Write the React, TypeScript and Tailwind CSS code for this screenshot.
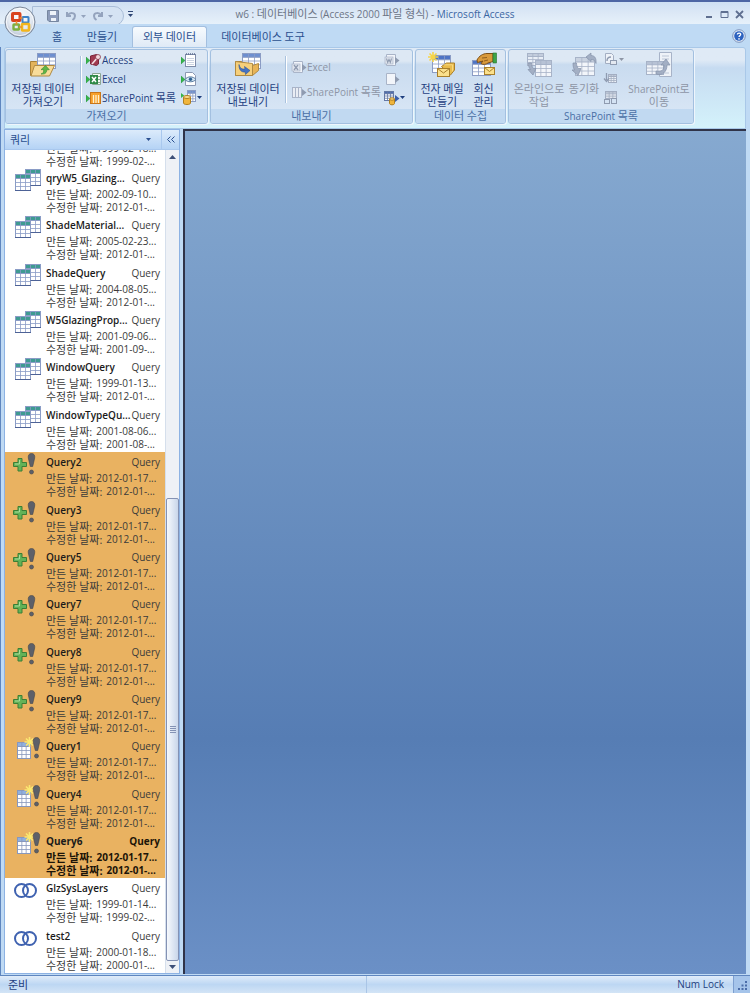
import type { ReactNode } from 'react'

const GRAY = '#8f9bb0'

// Hangul is set one pixel larger than the Latin text next to it
function T({ children }: { children: string }) {
  return (
    <>
      {children.split(/([\uac00-\ud7a3]+)/).map((part, i) =>
        i % 2 ? (
          <span key={i} className="text-[11px]">
            {part}
          </span>
        ) : (
          part
        ),
      )}
    </>
  )
}

/* ---------- drawings ---------- */

function Grid({ x, y, w, h, head = '#6d8fd0', line = '#8b9cc4', fill = '#fff' }: {
  x: number
  y: number
  w: number
  h: number
  head?: string
  line?: string
  fill?: string
}) {
  const r = h / 4
  const c = w / 3
  return (
    <g>
      <rect x={x} y={y} width={w} height={h} fill={fill} stroke={line} />
      <rect x={x} y={y} width={w} height={r} fill={head} stroke={line} />
      <path
        d={`M${x} ${y + 2 * r}h${w}M${x} ${y + 3 * r}h${w}M${x + c} ${y}v${h}M${x + 2 * c} ${y}v${h}`}
        stroke={line}
        strokeWidth="0.8"
      />
    </g>
  )
}

function OfficeLogo() {
  return (
    <svg viewBox="0 0 32 32" className="size-8" fill="none">
      <defs>
        <radialGradient id="orb" cx="0.5" cy="0.35" r="0.65">
          <stop offset="0" stopColor="#ffffff" />
          <stop offset="0.6" stopColor="#e3e9f1" />
          <stop offset="1" stopColor="#b4c0d2" />
        </radialGradient>
      </defs>
      <circle cx="16" cy="16" r="15" fill="url(#orb)" stroke="#7c8798" />
      <circle cx="16" cy="16" r="13.6" stroke="#fff" strokeOpacity="0.8" />
      <rect x="8.5" y="7.5" width="7.500" height="7" rx="0.5" stroke="#d9431e" strokeWidth="3" />
      <rect x="18.500" y="11" width="6" height="5.500" rx="0.5" stroke="#3d82c8" strokeWidth="2" />
      <rect x="9.500" y="18.500" width="5.500" height="5" rx="0.5" stroke="#7db042" strokeWidth="2.400" />
      <rect x="18" y="18" width="7" height="6.500" rx="0.5" stroke="#f2b51d" strokeWidth="2.600" />
      <path d="M15.500 12h3M12.500 15v3.500M15 21h3" stroke="#e98c2b" strokeWidth="1.600" />
    </svg>
  )
}

function SavedTable({ out = false }: { out?: boolean }) {
  return (
    <svg viewBox="0 0 28 26" className="h-[26px] w-7" fill="none">
      <path d="M1.500 9.500h6l2-2h6v16h-14z" fill="#e2b35c" stroke="#a98137" />
      <Grid x={8.5} y={1.5} w={18} h={15} />
      <path
        d={out ? 'M1.500 9.500l17 2v12h-17z' : 'M5.500 13.500h20l-5 10.500h-18.500z'}
        fill={out ? '#f6cf7a' : '#f8dc9a'}
        stroke="#b08a42"
      />
      {out ? (
        <>
          <path d="M18.500 13.500l6-2v7l-6 5z" fill="#e8b457" stroke="#b08a42" />
          <path d="M5 12.500c1 4 3 5 6 4.500l-.5-2.500 5.500 4-4.500 4-.3-2.500c-4 .5-6.500-2.500-6.200-7.500z" fill="#4573c4" stroke="#2f5596" strokeWidth="0.600" />
        </>
      ) : (
        <path d="M12 22c2-.5 3-2 2.600-4.500l-2.600.2 4.500-4.200 3.800 4.200-2.600.1c.2 3.200-2 4.700-5.700 4.200z" fill="#5cb648" stroke="#37862d" strokeWidth="0.600" />
      )}
    </svg>
  )
}

function Small({ children }: { children: ReactNode }) {
  return (
    <svg viewBox="0 0 16 16" className="size-4 shrink-0" fill="none">
      {children}
    </svg>
  )
}

const InArrow = () => <path d="M0 5v7l4-3.500z" fill="#35b34a" stroke="#2a9440" strokeWidth="0.500" />
const OutArrow = ({ color = GRAY }: { color?: string }) => <path d="M11 5v7l4.500-3.500z" fill={color} />

const AccessIcon = () => (
  <Small>
    <path d="M4.500 4l6-1.500 2 1.500v8l-2 1.500-6-1.500z" fill="#a03a50" stroke="#7c2438" />
    <path d="M6 12l6-7" stroke="#f5dfe3" strokeWidth="1.600" />
    <circle cx="12" cy="5" r="2.500" fill="#f3d9dd" stroke="#7c2438" strokeWidth="0.700" />
    <InArrow />
  </Small>
)

const ExcelIcon = () => (
  <Small>
    <path d="M6.500 2.500h8v11h-8z" fill="#f4faf4" stroke="#8aa594" />
    <path d="M11 5.500h3M11 8.500h3M11 11.500h3" stroke="#8aa594" />
    <rect x="4" y="4" width="8" height="9" fill="#2f8a48" />
    <path d="M6 6l4 5M10 6l-4 5" stroke="#fff" strokeWidth="1.500" />
    <InArrow />
  </Small>
)

const ListIcon = () => (
  <Small>
    <rect x="4.500" y="2.500" width="10" height="11" fill="#f7a02c" stroke="#c9761a" />
    <path d="M7.500 5v8M10 5v8M12.500 5v8" stroke="#fff1cf" strokeWidth="1.300" />
    <InArrow />
  </Small>
)

const TextFileIcon = () => (
  <Small>
    <rect x="4.500" y="2.500" width="10" height="12" fill="#fff" stroke="#7d8ba8" />
    <path d="M5 2h10" stroke="#5f6f90" strokeDasharray="1 1" strokeWidth="1.600" />
    <path d="M6 6.500h7M6 8.500h7M6 10.500h7M6 12.500h7" stroke="#b5c0d4" strokeWidth="0.700" />
    <InArrow />
  </Small>
)

const XmlIcon = () => (
  <Small>
    <path d="M4.500 1.500h7l3 3v10h-10z" fill="#fff" stroke="#8b98b2" />
    <path d="M4 8.500c2.500-3.500 8-3.500 11 0-3 3-8.500 3-11 0z" fill="#d7e8f5" stroke="#54789e" />
    <circle cx="9.500" cy="8.200" r="1.700" fill="#2f6292" />
    <InArrow />
  </Small>
)

const MoreImportIcon = () => (
  <Small>
    <Grid x={6.500} y={0.500} w={8} h={11} />
    <path d="M2.500 7v6c0 2 7 2 7 0V7" fill="#f0b53c" stroke="#b07f20" />
    <ellipse cx="6" cy="7" rx="3.500" ry="1.500" fill="#fbdc8e" stroke="#b07f20" />
    <path d="M0 3v5l3.200-2.500z" fill="#35b34a" />
  </Small>
)

const PaleDoc = ({ letter }: { letter?: 'x' | 'w' }) => (
  <Small>
    <path d="M2.500 2.500h9v11h-9z" fill="#f2f5fa" stroke="#a9b4c8" />
    {letter && <rect x="1" y="5" width="8" height="7" fill="#dfe4ed" stroke="#a9b4c8" strokeWidth="0.700" />}
    {letter === 'x' && <path d="M3 6l4 5M7 6l-4 5" stroke={GRAY} strokeWidth="1.300" />}
    {letter === 'w' && <path d="M2.500 6.500l1.200 4 1.300-3 1.300 3 1.200-4" stroke={GRAY} strokeWidth="1.100" />}
    <OutArrow />
  </Small>
)

const PaleList = () => (
  <Small>
    <rect x="1.500" y="3.500" width="9" height="10" fill="#e9edf4" stroke="#a9b4c8" />
    <path d="M4.500 4v9M7.500 4v9" stroke="#a9b4c8" />
    <OutArrow />
  </Small>
)

const MoreExportIcon = () => (
  <Small>
    <Grid x={0.500} y={1.500} w={9} h={9} head="#4d6db0" line="#6478a5" />
    <path d="M5.500 9v4.500c0 1.800 5 1.800 5 0V9" fill="#f0b53c" stroke="#b07f20" />
    <ellipse cx="8" cy="9" rx="2.500" ry="1.200" fill="#fbdc8e" stroke="#b07f20" />
    <OutArrow color="#3c5fa8" />
  </Small>
)

const PaleSmall = ({ kind }: { kind: 'discard' | 'cache' | 'relink' }) => (
  <Small>
    {kind === 'discard' && (
      <>
        <path d="M2.500 1.500h6l2 2v8h-8z" fill="#eef2f8" stroke="#a3aec2" />
        <rect x="7.500" y="8.500" width="6" height="4" fill="#e4e9f1" stroke={GRAY} />
        <path d="M4 9c0-3 2-4 4-4" stroke={GRAY} strokeWidth="1.400" />
      </>
    )}
    {kind === 'cache' && (
      <>
        <Grid x={5.500} y={3.500} w={8} h={8} head="#c3ccdb" line="#a3aec2" fill="#eef2f8" />
        <path d="M3.500 2v7M1 7.500l2.500 3L6 7.500" stroke={GRAY} strokeWidth="1.300" />
      </>
    )}
    {kind === 'relink' && (
      <>
        <Grid x={2.500} y={1.500} w={11} h={7} head="#c3ccdb" line="#a3aec2" fill="#eef2f8" />
        <rect x="1.500" y="9.500" width="5" height="4" stroke={GRAY} />
        <rect x="8.500" y="8.500" width="5" height="5" stroke={GRAY} />
      </>
    )}
  </Small>
)

function MailTable() {
  return (
    <svg viewBox="0 0 28 26" className="h-[26px] w-7" fill="none">
      <Grid x={4.500} y={3.500} w={18} h={17} head="#4f74c4" />
      <path d="M5 0v10M0 5h10M1.500 1.500l7 7M8.500 1.500l-7 7" stroke="#f7d548" strokeWidth="1.600" />
      <path d="M13.500 14.500l5-3.500h8v7l-4 5z" fill="#e9bb4c" stroke="#a97f2b" />
      <path d="M16 12.800h8M24.500 12.500v7" stroke="#fbe08c" strokeWidth="0.800" />
      <rect x="9.500" y="16.500" width="12" height="8" fill="#fbe08c" stroke="#a97f2b" />
      <path d="M9.500 16.500l6 4.500 6-4.500" stroke="#a97f2b" />
    </svg>
  )
}

function ReplyManage() {
  return (
    <svg viewBox="0 0 28 26" className="h-[26px] w-7" fill="none">
      <Grid x={2.500} y={8.500} w={18} h={15} head="#4f74c4" />
      <rect x="14.500" y="15.500" width="10" height="7" fill="#fbe08c" stroke="#a97f2b" />
      <path d="M14.500 15.500l5 4 5-4" stroke="#a97f2b" />
      <path d="M7 8c2-4 6-6.500 10-6.500h6v8l-5 1.500c-2 1.500-5 2-7 .5l2-2.500-5.500 1.500z" fill="#d99a3c" stroke="#7d4f17" />
      <path d="M12 6l5-.5M14 9l4-1" stroke="#7d4f17" strokeWidth="0.800" />
      <rect x="23" y="1" width="3.500" height="10" fill="#3ea548" stroke="#27702f" strokeWidth="0.600" />
    </svg>
  )
}

function PaleTable({ kind }: { kind: 'online' | 'sync' | 'move' }) {
  return (
    <svg viewBox="0 0 28 26" className="h-[26px] w-7" fill="none">
      {kind === 'online' && (
        <>
          <Grid x={2.500} y={1.500} w={16} h={12} head="#c3cddd" line="#a7b3c8" fill="#e9eff7" />
          <Grid x={10.500} y={8.500} w={16} h={16} head="#b7c2d5" line="#a7b3c8" fill="#f2f5fa" />
          <path d="M3.500 11c0 3 .5 5 2 6.500H3l5 5.500 3-6.500H8.500C7 15 6.500 13 6.500 11z" fill="#a3afc4" stroke="#8592aa" strokeWidth="0.700" />
        </>
      )}
      {kind === 'sync' && (
        <>
          <Grid x={5.500} y={5.500} w={19} h={18} head="#c9d2e0" line="#a7b3c8" fill="#f2f5fa" />
          <path d="M3 11c0 4 .5 5 1.500 7H2l6 5.500 3-7H8.500C7 15 6.500 13 6.500 11z" fill="#a3afc4" stroke="#8592aa" strokeWidth="0.700" />
          <path d="M16 5l5-4v2.500c4 0 5.500 3 5 8-1-3-2-4-5-4v2z" fill="#a3afc4" stroke="#8592aa" strokeWidth="0.700" />
        </>
      )}
      {kind === 'move' && (
        <>
          <path d="M14.500 0.500h12v24h-12z" fill="#eef2f8" stroke="#a7b3c8" />
          <path d="M17 4h7M17 7h7M17 21h7" stroke="#bcc6d6" />
          <Grid x={1.500} y={9.500} w={17} h={13} head="#b7c2d5" line="#a7b3c8" fill="#f2f5fa" />
          <path d="M11 19c6 1 8-1 8-6h-3l5-6 4 6h-3c0 7-5 11-11 9z" fill="#a3afc4" stroke="#8592aa" strokeWidth="0.700" />
        </>
      )}
    </svg>
  )
}

type Kind = 'select' | 'append' | 'make' | 'union'

const Bang = ({ x }: { x: number }) => (
  <g fill="#5d6069" stroke="#43464e" strokeWidth="0.600">
    <path d={`M${x} 1.500c2.400 0 3.600 1.800 3.200 4.500l-2 8.500h-2.400l-2-8.500c-.4-2.700.8-4.500 3.200-4.500z`} />
    <circle cx={x} cy="20" r="2" />
  </g>
)

function QueryIcon({ kind }: { kind: Kind }) {
  return (
    <svg viewBox="0 0 32 26" className="h-[26px] w-8" fill="none">
      {kind === 'select' && (
        <>
          <Grid x={13.500} y={1.500} w={15} h={16} head="#3f9a92" line="#8a9cc6" />
          <Grid x={3.500} y={6.500} w={15} h={16} head="#3f9a92" line="#8a9cc6" />
          <path d="M3 22.500h16M18.500 17.500h10.500" stroke="#4d6296" />
        </>
      )}
      {kind === 'append' && (
        <>
          <path d="M6 6.500h4v4h4.500v4H10v4.500H6v-4.500H1.500v-4H6z" fill="#63b257" stroke="#3b7f36" />
          <path d="M7.500 8v4H3" stroke="#a8dc9c" />
          <Bang x={19.500} />
        </>
      )}
      {kind === 'make' && (
        <>
          <Grid x={5.500} y={6.500} w={13} h={16} head="#8fb0e0" line="#8898bd" />
          <path d="M17.500 1v10M12.500 6h10M14 2.500l7 7M21 2.500l-7 7" stroke="#fbe870" strokeWidth="1.600" />
          <Bang x={24.500} />
        </>
      )}
      {kind === 'union' && (
        <g stroke="#3f62b0" strokeWidth="2">
          <circle cx="9.500" cy="12.500" r="6.500" />
          <circle cx="17.500" cy="12.500" r="6.500" />
        </g>
      )}
    </svg>
  )
}

const Caret = ({ className = '' }: { className?: string }) => (
  <svg viewBox="0 0 5 3" className={`h-[3px] w-[5px] shrink-0 ${className}`}>
    <path d="M0 0h5L2.500 3z" fill="currentColor" />
  </svg>
)

/* ---------- ribbon ---------- */

function Group({ title, className, children }: { title: string; className: string; children: ReactNode }) {
  return (
    <section
      className={`flex h-[75px] flex-col overflow-hidden rounded-[3px] border border-[#a3c0e0] bg-linear-to-b from-[#dde8f4] from-15% via-[#c9dbef] via-20% to-[#dbe8f6] shadow-[1px_1px_0_#eef5fc] ${className}`}
    >
      <div className="flex flex-1">{children}</div>
      <h2 className="bg-[#c1d9f1] text-center leading-[14px] text-[#4a6fa5]">
        <T>{title}</T>
      </h2>
    </section>
  )
}

function BigButton({ icon, lines, className, disabled }: {
  icon: ReactNode
  lines: string[]
  className: string
  disabled?: boolean
}) {
  return (
    <button
      type="button"
      disabled={disabled}
      className={`flex flex-col items-center gap-1 pt-0.5 leading-[13px] whitespace-nowrap text-[#1f3f7f] disabled:text-[#8d95a5] ${className}`}
    >
      {icon}
      <span className="flex flex-col items-center">
        {lines.map((l) => (
          <span key={l} className="h-[13px]">
            <T>{l}</T>
          </span>
        ))}
      </span>
    </button>
  )
}

function SmallButton({ icon, label, disabled, caret, name }: {
  icon: ReactNode
  label?: string
  name?: string
  disabled?: boolean
  caret?: boolean
}) {
  return (
    <button
      type="button"
      disabled={disabled}
      aria-label={name}
      className="flex h-[19px] items-center whitespace-nowrap text-[#1f3f7f] disabled:text-[#8d95a5]"
    >
      {icon}
      {label && (
        <span>
          <T>{label}</T>
        </span>
      )}
      {caret && <Caret />}
    </button>
  )
}

const Divider = () => <div className="my-1.5 w-0.5 border-r border-l border-r-white border-l-[#a9c2de]" />

function Ribbon() {
  return (
    <div className="rounded-t-[3px] border border-[#a9c8e8] bg-linear-to-b from-[#dfeaf6] from-15% via-[#c6dbf1] via-25% to-[#d4f2fb] pb-1">
      <div className="flex gap-0.5 pt-px">
        <Group title="가져오기" className="w-[203px]">
          <BigButton className="w-[74px]" icon={<SavedTable />} lines={['저장된 데이터', '가져오기']} />
          <Divider />
          <div className="flex flex-1 flex-col items-start pl-1">
            <SmallButton icon={<AccessIcon />} label="Access" />
            <SmallButton icon={<ExcelIcon />} label="Excel" />
            <SmallButton icon={<ListIcon />} label="SharePoint 목록" />
          </div>
          <div className="flex w-[26px] flex-col items-start">
            <SmallButton icon={<TextFileIcon />} name="텍스트 파일" />
            <SmallButton icon={<XmlIcon />} name="XML 파일" />
            <SmallButton icon={<MoreImportIcon />} name="기타" caret />
          </div>
        </Group>

        <Group title="내보내기" className="w-[203px]">
          <BigButton className="w-[74px]" icon={<SavedTable out />} lines={['저장된 데이터', '내보내기']} />
          <Divider />
          <div className="flex flex-1 flex-col items-start gap-1.5 pt-[7px] pl-1">
            <SmallButton icon={<PaleDoc letter="x" />} label="Excel" disabled />
            <SmallButton icon={<PaleList />} label="SharePoint 목록" disabled />
          </div>
          <div className="flex w-[28px] flex-col items-start">
            <SmallButton icon={<PaleDoc letter="w" />} name="Word" disabled />
            <SmallButton icon={<PaleDoc />} name="텍스트 파일" disabled />
            <SmallButton icon={<MoreExportIcon />} name="기타" caret />
          </div>
        </Group>

        <Group title="데이터 수집" className="w-[91px]">
          <BigButton className="w-[52px]" icon={<MailTable />} lines={['전자 메일', '만들기']} />
          <BigButton className="w-[31px]" icon={<ReplyManage />} lines={['회신', '관리']} />
        </Group>

        <Group title="SharePoint 목록" className="w-[186px]">
          <BigButton className="w-[60px]" icon={<PaleTable kind="online" />} lines={['온라인으로', '작업']} disabled />
          <BigButton className="w-[30px]" icon={<PaleTable kind="sync" />} lines={['동기화']} disabled />
          <div className="flex w-[28px] flex-col items-start pl-1">
            <SmallButton icon={<PaleSmall kind="discard" />} name="변경 내용 취소" disabled caret />
            <SmallButton icon={<PaleSmall kind="cache" />} name="목록 데이터 캐시" disabled />
            <SmallButton icon={<PaleSmall kind="relink" />} name="목록 다시 연결" disabled />
          </div>
          <BigButton className="w-[64px]" icon={<PaleTable kind="move" />} lines={['SharePoint로', '이동']} disabled />
        </Group>
      </div>
    </div>
  )
}

function TitleBar() {
  return (
    <header className="grid h-6 grid-cols-[1fr_auto_1fr] items-center border-t-2 border-[#4e66a4] bg-linear-to-b from-[#cfe0f3] via-[#dce8f6] to-[#e6f1fa]">
      <div className="flex items-center gap-2 pl-8">
        <div className="mt-1 flex h-5 w-[92px] items-center gap-1.5 rounded-r-full border border-[#a9bdd8] bg-[#d5e3f3] pl-3.5 text-[#94a3bd]">
          <button type="button" aria-label="저장">
            <svg viewBox="0 0 12 12" className="size-3" fill="none">
              <path d="M.5.5h11v11H2l-1.500-1.500z" fill="#8d9cba" stroke="#76869f" />
              <path d="M3 1h6v4H3zM4 8h5v3H4z" fill="#eef3f9" />
            </svg>
          </button>
          <button type="button" aria-label="실행 취소" className="flex items-center gap-1">
            <svg viewBox="0 0 12 12" className="size-3" fill="none" stroke="currentColor" strokeWidth="2">
              <path d="M2 2v4h4M2.500 5.500C5 2 10 2.500 10 6c0 2-1 3-2.500 4" />
            </svg>
            <Caret />
          </button>
          <button type="button" aria-label="다시 실행" className="flex items-center gap-1">
            <svg viewBox="0 0 12 12" className="size-3" fill="none" stroke="currentColor" strokeWidth="2">
              <path d="M10 2v4H6M9.500 5.500C7 2 2 2.500 2 6c0 2 1 3 2.500 4" />
            </svg>
            <Caret />
          </button>
        </div>
        <button type="button" aria-label="빠른 실행 도구 모음 사용자 지정" className="-ml-1 flex flex-col gap-0.5 text-[#2d4574]">
          <span className="h-px w-[5px] bg-current" />
          <Caret />
        </button>
      </div>
      <h1 className="text-[#6c7586]">
        <T>w6 : 데이터베이스 (Access 2000 파일 형식) - </T>
        <span className="text-[#3b66a3]">Microsoft Access</span>
      </h1>
      <div className="flex items-center justify-end gap-1.5 pr-1.5 text-[#5f6f90]">
        <button type="button" aria-label="최소화">
          <svg viewBox="0 0 9 9" className="size-[9px]">
            <path d="M1 6h6v2H1z" fill="currentColor" />
          </svg>
        </button>
        <button type="button" aria-label="최대화">
          <svg viewBox="0 0 9 9" className="size-[9px]" fill="none" stroke="currentColor">
            <path d="M1 1.500h7v6H1zM1 2.500h7" />
          </svg>
        </button>
        <button type="button" aria-label="닫기">
          <svg viewBox="0 0 9 9" className="size-[9px]" stroke="currentColor" strokeWidth="1.800">
            <path d="M1 1l7 7M8 1L1 8" />
          </svg>
        </button>
      </div>
    </header>
  )
}

function Tabs() {
  const tab = 'h-[21px] whitespace-nowrap'
  return (
    <nav className="flex h-[23px] items-end bg-[#bfdaf4] pr-1 pl-[42px] text-[#2a4f8f]" aria-label="리본 메뉴">
      <button type="button" className={`${tab} w-[30px]`}>
        <T>홈</T>
      </button>
      <button type="button" className={`${tab} w-[60px]`}>
        <T>만들기</T>
      </button>
      <button
        type="button"
        aria-current="page"
        className={`${tab} w-[75px] rounded-t-[3px] border border-b-0 border-[#a3bfdf] bg-linear-to-b from-[#f7fbfe] to-[#dfeaf6]`}
      >
        <T>외부 데이터</T>
      </button>
      <button type="button" className={`${tab} w-[112px]`}>
        <T>데이터베이스 도구</T>
      </button>
      <button type="button" aria-label="도움말" className="mb-1 ml-auto">
        <svg viewBox="0 0 14 14" className="size-3.5" fill="none">
          <circle cx="7" cy="7" r="6.300" fill="#e6effa" stroke="#7e93bb" />
          <circle cx="7" cy="7" r="4.800" fill="#2d62bf" />
          <path d="M5.300 5.500c.2-2 3.600-1.800 3.400 0C8.600 6.600 7 6.700 7 8" stroke="#fff" strokeWidth="1.300" />
          <circle cx="7" cy="9.900" r="0.800" fill="#fff" />
        </svg>
      </button>
    </nav>
  )
}

/* ---------- navigation pane ---------- */

type Query = { name: string; made: string; edited: string; kind: Kind; current?: boolean }

const queries: Query[] = [
  { name: 'qryW5_Glazing...', made: '2002-09-10...', edited: '2012-01-...', kind: 'select' },
  { name: 'ShadeMaterial...', made: '2005-02-23...', edited: '2012-01-...', kind: 'select' },
  { name: 'ShadeQuery', made: '2004-08-05...', edited: '2012-01-...', kind: 'select' },
  { name: 'W5GlazingProp...', made: '2001-09-06...', edited: '2001-09-...', kind: 'select' },
  { name: 'WindowQuery', made: '1999-01-13...', edited: '2012-01-...', kind: 'select' },
  { name: 'WindowTypeQu...', made: '2001-08-06...', edited: '2001-08-...', kind: 'select' },
  { name: 'Query2', made: '2012-01-17...', edited: '2012-01-...', kind: 'append' },
  { name: 'Query3', made: '2012-01-17...', edited: '2012-01-...', kind: 'append' },
  { name: 'Query5', made: '2012-01-17...', edited: '2012-01-...', kind: 'append' },
  { name: 'Query7', made: '2012-01-17...', edited: '2012-01-...', kind: 'append' },
  { name: 'Query8', made: '2012-01-17...', edited: '2012-01-...', kind: 'append' },
  { name: 'Query9', made: '2012-01-17...', edited: '2012-01-...', kind: 'append' },
  { name: 'Query1', made: '2012-01-17...', edited: '2012-01-...', kind: 'make' },
  { name: 'Query4', made: '2012-01-17...', edited: '2012-01-...', kind: 'make' },
  { name: 'Query6', made: '2012-01-17...', edited: '2012-01-...', kind: 'make', current: true },
  { name: 'GlzSysLayers', made: '1999-01-14...', edited: '1999-02-...', kind: 'union' },
  { name: 'test2', made: '2000-01-18...', edited: '2000-01-...', kind: 'union' },
]

function Dates({ made, edited }: { made: string; edited: string }) {
  return (
    <dl className="leading-[13px]">
      <div className="flex h-[13px] gap-1">
        <dt className="text-[11px]">만든 날짜:</dt>
        <dd>{made}</dd>
      </div>
      <div className="flex h-[13px] gap-1">
        <dt className="text-[11px]">수정한 날짜:</dt>
        <dd>{edited}</dd>
      </div>
    </dl>
  )
}

function QueryRow({ q }: { q: Query }) {
  const marked = q.kind === 'append' || q.kind === 'make'
  return (
    <li className={`flex flex-1 basis-[47px] ${marked ? 'bg-[#e9b261]' : ''} ${q.current ? 'font-bold text-[#1c1408]' : ''}`}>
      <div className="w-[41px] shrink-0 pl-[7px]">
        <QueryIcon kind={q.kind} />
      </div>
      <div className="min-w-0 flex-1 pr-[5px] whitespace-nowrap">
        <div className="flex h-5 items-center justify-between">
          <span className={`text-[#1a1a1a] ${q.current ? 'font-bold' : 'font-semibold'}`}>{q.name}</span>
          <span>Query</span>
        </div>
        <Dates made={q.made} edited={q.edited} />
      </div>
    </li>
  )
}

function ScrollBar() {
  return (
    <div className="flex w-[14px] flex-col border-l border-[#d5dfec] bg-[#eef1f6] text-[#3d4f78]">
      <button type="button" aria-label="위로" className="flex h-3.5 items-center justify-center">
        <svg viewBox="0 0 7 4" className="h-1 w-[7px]">
          <path d="M0 4h7L3.500 0z" fill="currentColor" />
        </svg>
      </button>
      <div className="flex flex-1 flex-col">
        <div className="grow-[335]" />
        <div className="flex grow-[455] flex-col items-center justify-center gap-px rounded-[2px] border border-[#8492b4] bg-linear-to-r from-[#f6f9fd] to-[#c9d6ea]">
          <span className="h-px w-1.5 bg-[#8492b4]" />
          <span className="h-px w-1.5 bg-[#8492b4]" />
          <span className="h-px w-1.5 bg-[#8492b4]" />
          <span className="h-px w-1.5 bg-[#8492b4]" />
        </div>
      </div>
      <button type="button" aria-label="아래로" className="flex h-3 items-center justify-center">
        <svg viewBox="0 0 7 4" className="h-1 w-[7px]">
          <path d="M0 0h7L3.500 4z" fill="currentColor" />
        </svg>
      </button>
    </div>
  )
}

function NavPane() {
  return (
    <aside className="flex w-[176px] shrink-0 flex-col border border-[#8db2e3] bg-white">
      <div className="flex h-5 items-center border-b border-[#a9c8ee] bg-linear-to-b from-[#dcebfb] to-[#b5d3f5] text-[#2a4f8f]">
        <button type="button" className="flex flex-1 items-center justify-between pr-2.5 pl-[5px]">
          <span>
            <T>쿼리</T>
          </span>
          <Caret />
        </button>
        <button type="button" aria-label="탐색 창 축소" className="h-full w-[18px] border-l border-[#a9c8ee]">
          <svg viewBox="0 0 8 7" className="mx-auto h-[7px] w-2" fill="none" stroke="currentColor">
            <path d="M3.500.500l-3 3 3 3M7.500.500l-3 3 3 3" />
          </svg>
        </button>
      </div>
      <div className="flex flex-1">
        <ul className="flex min-w-0 flex-1 flex-col text-[#3a3a3a]">
          <li className="flex h-[18px] flex-col justify-end overflow-hidden pl-[41px]">
            <Dates made="1999-02-18..." edited="1999-02-..." />
          </li>
          {queries.map((q) => (
            <QueryRow key={q.name} q={q} />
          ))}
        </ul>
        <ScrollBar />
      </div>
    </aside>
  )
}

function StatusBar() {
  return (
    <footer className="flex h-[18px] items-stretch border-t border-[#5f86bf] bg-linear-to-b from-[#e0ecf9] via-[#bdd7f3] to-[#d3e4f6] leading-[17px] text-[#1f3f7f]">
      <div className="flex-1 border-r border-[#a9c5e6] pl-2">
        <T>준비</T>
      </div>
      <div className="flex-1 pr-[9px] text-right">Num Lock</div>
      <div className="flex w-[17px] items-end justify-end border-l border-[#7d9fd0] bg-[#a5c4ea] p-0.5">
        <svg viewBox="0 0 10 10" className="size-2.5" fill="#4a6ca8">
          <path d="M7 0h2v2H7zM7 3.500h2v2H7zM3.500 3.500h2v2h-2zM7 7h2v2H7zM3.500 7h2v2h-2zM0 7h2v2H0z" />
        </svg>
      </div>
    </footer>
  )
}

export default function App() {
  return (
    <div className="relative flex min-h-screen flex-col bg-[#bfdaf4] font-['Open_Sans','Noto_Sans_CJK_KR',sans-serif] text-[10px] leading-[14px]">
      <TitleBar />
      <Tabs />
      <button type="button" aria-label="Office 단추" className="absolute top-1.5 left-1">
        <OfficeLogo />
      </button>
      <div className="flex flex-1 flex-col border-l border-[#5f86bf] pr-1 pl-[3px]">
        <Ribbon />
        <div className="flex flex-1 gap-[3px] pb-px">
          <NavPane />
          <main className="flex-1 border-t-2 border-l-2 border-[#2f3348] bg-linear-to-b from-[#86a9d0] via-[#567db4] via-72% to-[#6b90c6]" />
        </div>
      </div>
      <StatusBar />
    </div>
  )
}
